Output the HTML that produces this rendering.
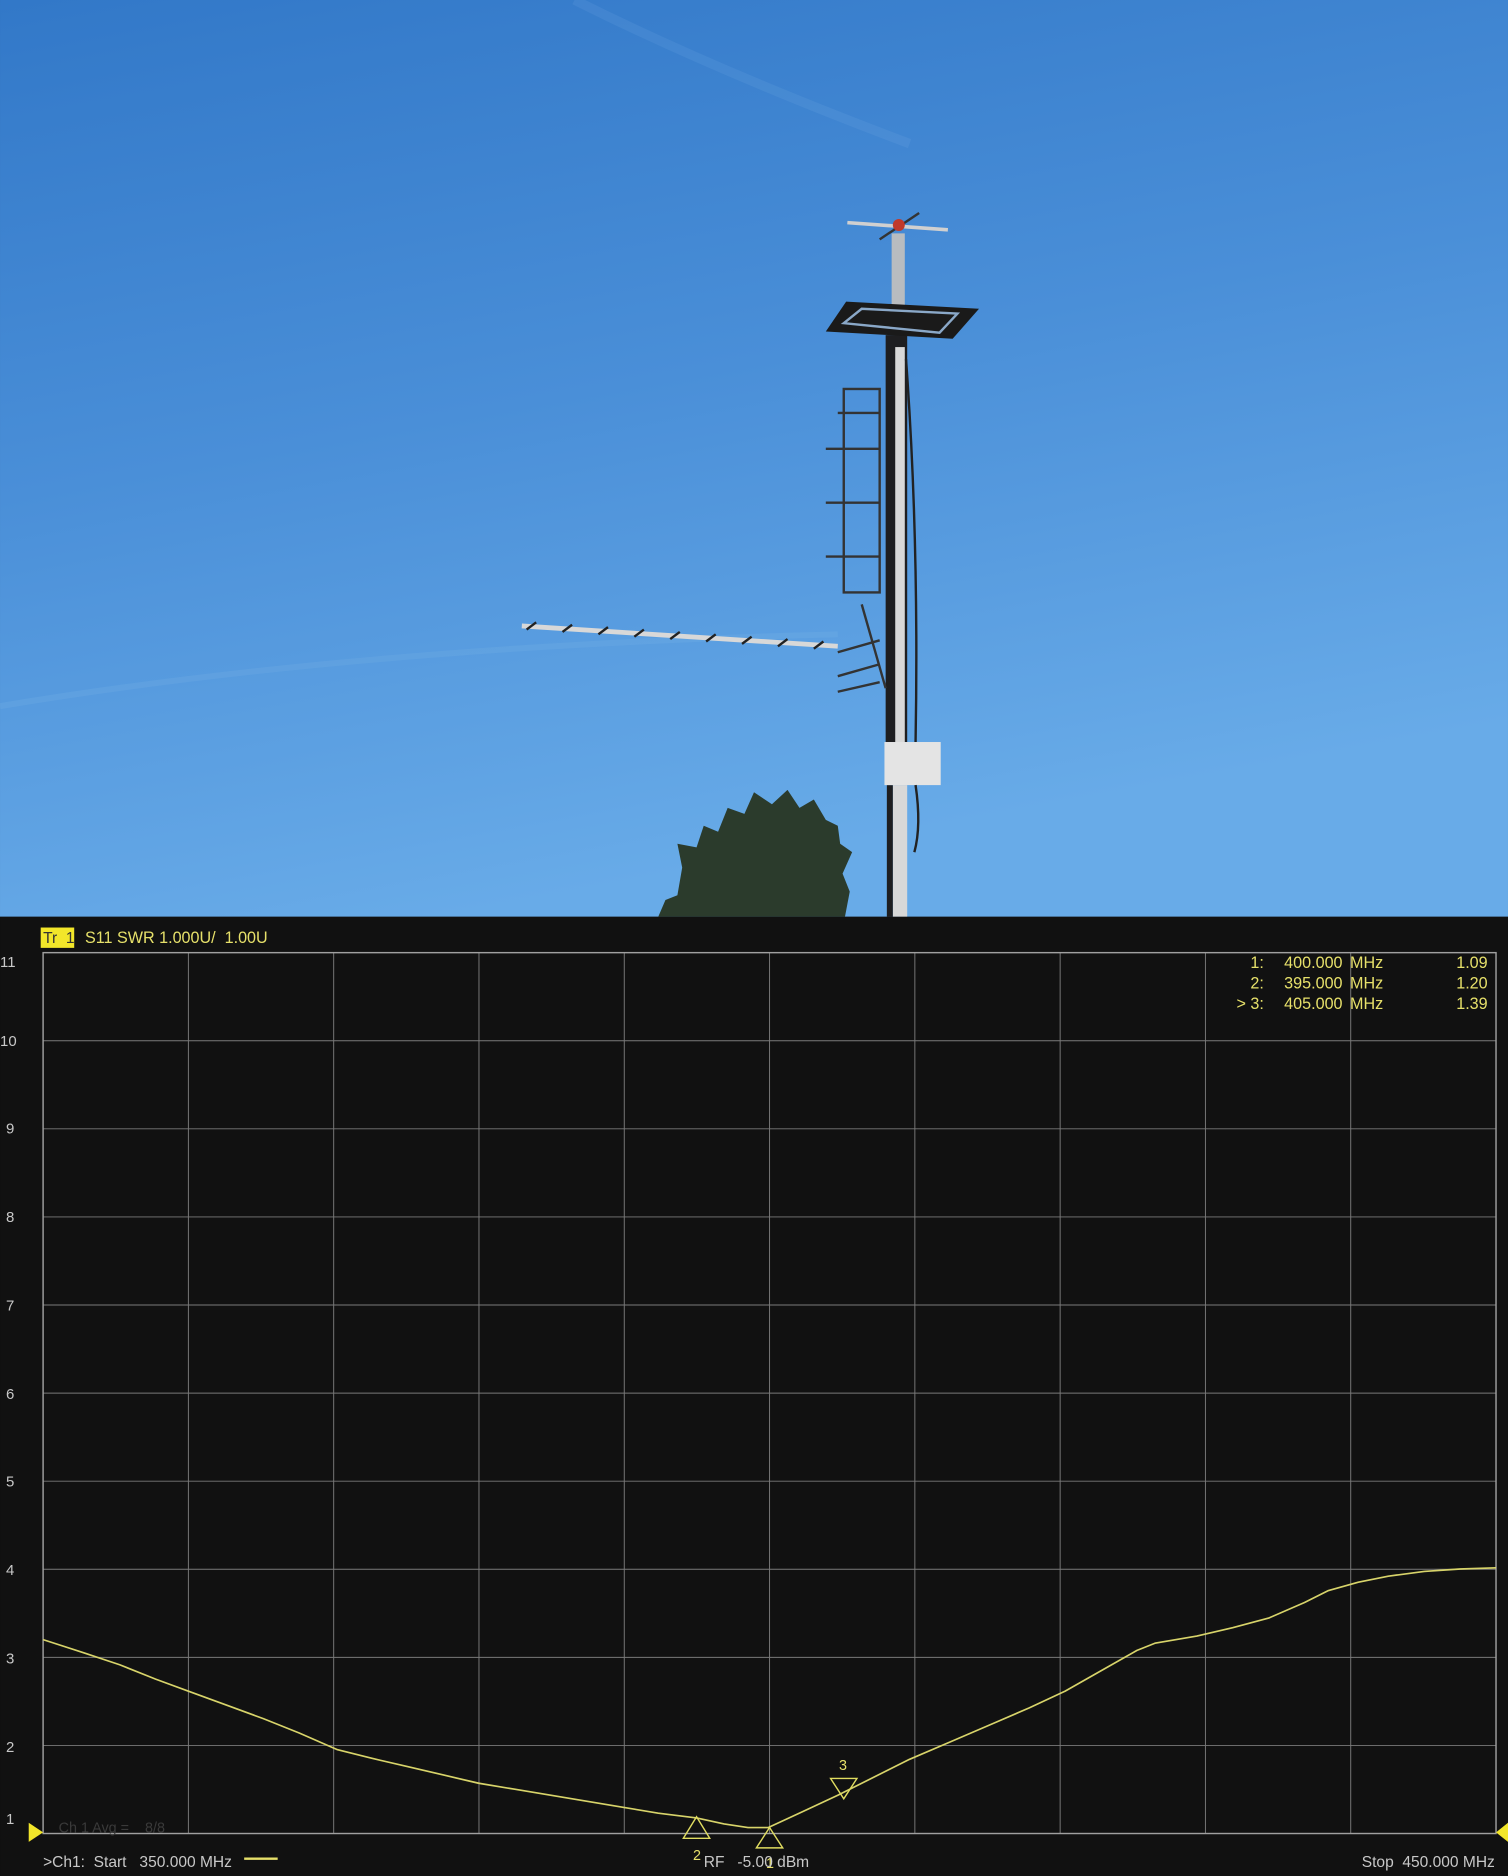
<!DOCTYPE html>
<html><head><meta charset="utf-8"><style>
html,body{margin:0;padding:0;background:#111;}
svg{display:block}
text{font-family:"Liberation Sans",sans-serif;white-space:pre;}
</style></head><body>
<svg width="1508" height="1876" viewBox="0 0 1260 1567.5" xmlns="http://www.w3.org/2000/svg">
<defs>
<linearGradient id="sky" x1="0" y1="0" x2="0.3" y2="1">
<stop offset="0" stop-color="#3278c8"/>
<stop offset="0.5" stop-color="#4a8fd8"/>
<stop offset="1" stop-color="#68abe8"/>
</linearGradient>
</defs>
<rect x="0" y="0" width="1260" height="766" fill="url(#sky)"/>
<path d="M0 590 Q300 540 700 530" stroke="#8ec0ee" stroke-width="5" fill="none" opacity="0.15"/>
<path d="M480 0 Q600 60 760 120" stroke="#8ec0ee" stroke-width="8" fill="none" opacity="0.12"/>
<path d="M550 766 L556 752 L566 748 L570 725 L566 705 L582 708 L588 690 L600 695 L608 675 L622 680 L630 662 L645 672 L658 660 L668 675 L680 668 L690 685 L700 690 L702 705 L712 712 L704 730 L710 745 L706 766 Z" fill="#2b3b2c"/>
<rect x="745" y="195" width="11" height="60" fill="#b8bcc0"/>
<rect x="740" y="280" width="18" height="340" fill="#1e1e20"/>
<rect x="748" y="290" width="8" height="340" fill="#d8d8d8"/>
<rect x="746" y="656" width="12" height="110" fill="#d8d8d8"/>
<rect x="741" y="656" width="5" height="110" fill="#1e1e20"/>
<line x1="708" y1="186" x2="792" y2="192" stroke="#d0d0d0" stroke-width="3"/>
<line x1="735" y1="200" x2="768" y2="178" stroke="#333" stroke-width="2"/>
<circle cx="751" cy="188" r="5" fill="#c0392b"/>
<path d="M690 277 L707 252 L818 258 L796 283 Z" fill="#1a1a1a"/>
<path d="M705 270 L720 258 L800 262 L785 278 Z" fill="none" stroke="#8aa8c8" stroke-width="2"/>
<rect x="705" y="325" width="30" height="170" fill="none" stroke="#333" stroke-width="2"/>
<g stroke="#333" stroke-width="2">
<line x1="690" y1="375" x2="735" y2="375"/><line x1="690" y1="420" x2="735" y2="420"/>
<line x1="690" y1="465" x2="735" y2="465"/><line x1="700" y1="345" x2="735" y2="345"/>
<line x1="720" y1="505" x2="740" y2="575"/>
<line x1="700" y1="545" x2="735" y2="535"/><line x1="700" y1="565" x2="735" y2="555"/><line x1="700" y1="578" x2="735" y2="570"/>
</g>
<line x1="436" y1="523" x2="700" y2="540" stroke="#d8d8d8" stroke-width="4"/>
<g stroke="#222" stroke-width="2">
<line x1="440" y1="526" x2="448" y2="520"/><line x1="470" y1="528" x2="478" y2="522"/><line x1="500" y1="530" x2="508" y2="524"/>
<line x1="530" y1="532" x2="538" y2="526"/><line x1="560" y1="534" x2="568" y2="528"/><line x1="590" y1="536" x2="598" y2="530"/>
<line x1="620" y1="538" x2="628" y2="532"/><line x1="650" y1="540" x2="658" y2="534"/><line x1="680" y1="542" x2="688" y2="536"/>
</g>
<rect x="739" y="620" width="47" height="36" fill="#e4e4e4"/>
<path d="M757 300 Q768 450 765 620" stroke="#222" stroke-width="2" fill="none"/>
<path d="M765 656 Q770 690 764 712" stroke="#222" stroke-width="2" fill="none"/>

<rect x="0" y="766" width="1260" height="802" fill="#111111"/>
<rect x="34" y="775" width="28" height="17" fill="#f2e62a"/>
<text x="36" y="788" font-size="13" fill="#333">Tr  1</text>
<text x="71" y="788" font-size="13.5" fill="#e6e06a">S11 SWR 1.000U/  1.00U</text>
<g stroke="#7a7a7a" stroke-width="0.8">
<line x1="157.4" y1="796" x2="157.4" y2="1532"/><line x1="278.8" y1="796" x2="278.8" y2="1532"/>
<line x1="400.2" y1="796" x2="400.2" y2="1532"/><line x1="521.6" y1="796" x2="521.6" y2="1532"/>
<line x1="643" y1="796" x2="643" y2="1532"/><line x1="764.4" y1="796" x2="764.4" y2="1532"/>
<line x1="885.8" y1="796" x2="885.8" y2="1532"/><line x1="1007.2" y1="796" x2="1007.2" y2="1532"/>
<line x1="1128.6" y1="796" x2="1128.6" y2="1532"/>
<line x1="36" y1="869.6" x2="1250" y2="869.6"/><line x1="36" y1="943.2" x2="1250" y2="943.2"/>
<line x1="36" y1="1016.8" x2="1250" y2="1016.8"/><line x1="36" y1="1090.4" x2="1250" y2="1090.4"/>
<line x1="36" y1="1164" x2="1250" y2="1164"/><line x1="36" y1="1237.6" x2="1250" y2="1237.6"/>
<line x1="36" y1="1311.2" x2="1250" y2="1311.2"/><line x1="36" y1="1384.8" x2="1250" y2="1384.8"/>
<line x1="36" y1="1458.4" x2="1250" y2="1458.4"/>
</g>
<rect x="36" y="796" width="1214" height="736" fill="none" stroke="#a0a0a0" stroke-width="1.2"/>
<g font-size="12.5" fill="#c8c8c8">
<text x="0" y="808">11</text><text x="0" y="874">10</text><text x="5" y="947">9</text>
<text x="5" y="1021">8</text><text x="5" y="1095">7</text><text x="5" y="1169">6</text>
<text x="5" y="1242">5</text><text x="5" y="1316">4</text><text x="5" y="1390">3</text>
<text x="5" y="1464">2</text><text x="5" y="1524">1</text>
</g>
<g font-size="13.5" fill="#e6e06a">
<text x="1056" y="809" text-anchor="end">1:</text><text x="1073" y="809">400.000</text><text x="1128" y="809">MHz</text><text x="1243" y="809" text-anchor="end">1.09</text>
<text x="1056" y="826" text-anchor="end">2:</text><text x="1073" y="826">395.000</text><text x="1128" y="826">MHz</text><text x="1243" y="826" text-anchor="end">1.20</text>
<text x="1056" y="843" text-anchor="end">&gt; 3:</text><text x="1073" y="843">405.000</text><text x="1128" y="843">MHz</text><text x="1243" y="843" text-anchor="end">1.39</text>
</g>
<path d="M36 1370 L70 1381 L100 1391 L130 1403 L160 1414 L190 1425 L220 1436 L250 1448 L282 1462 L310 1469 L340 1476 L370 1483 L400 1490 L430 1495 L460 1500 L490 1505 L520 1510 L550 1515 L582 1519 L605 1524 L625 1527 L642 1527 L670 1514 L700 1500 L730 1485 L760 1470 L795 1455 L830 1440 L860 1427 L890 1413 L920 1396 L950 1379 L965 1373 L1000 1367 L1030 1360 L1060 1352 L1090 1339 L1110 1329 L1135 1322 L1160 1317 L1190 1313 L1220 1311 L1250 1310" fill="none" stroke="#d8d46a" stroke-width="1.4" stroke-linejoin="round"/>
<g fill="none" stroke="#e0dc60" stroke-width="1.2">
<path d="M571 1536 L582 1518 L593 1536 Z"/>
<path d="M632 1544 L643 1527 L654 1544 Z"/>
<path d="M694 1486 L716 1486 L705 1503 Z"/>
</g>
<text x="701" y="1479" font-size="12" fill="#e6e06a">3</text>
<text x="579" y="1554" font-size="12" fill="#e6e06a">2</text>
<text x="640" y="1561" font-size="12" fill="#e6e06a">1</text>
<path d="M24 1523 L36 1531 L24 1539 Z" fill="#f2e62a"/>
<path d="M1260 1523 L1250 1531 L1260 1539 Z" fill="#f2e62a"/>
<text x="49" y="1531" font-size="12" fill="#3a3a3a">Ch 1 Avg =    8/8</text>
<g font-size="13" fill="#c8c8c8">
<text x="36" y="1560">&gt;Ch1:  Start   350.000 MHz</text>
<text x="588" y="1560">RF   -5.00 dBm</text>
<text x="1249" y="1560" text-anchor="end">Stop  450.000 MHz</text>
</g>
<line x1="204" y1="1553" x2="232" y2="1553" stroke="#e6e06a" stroke-width="2"/>
</svg>
</body></html>
